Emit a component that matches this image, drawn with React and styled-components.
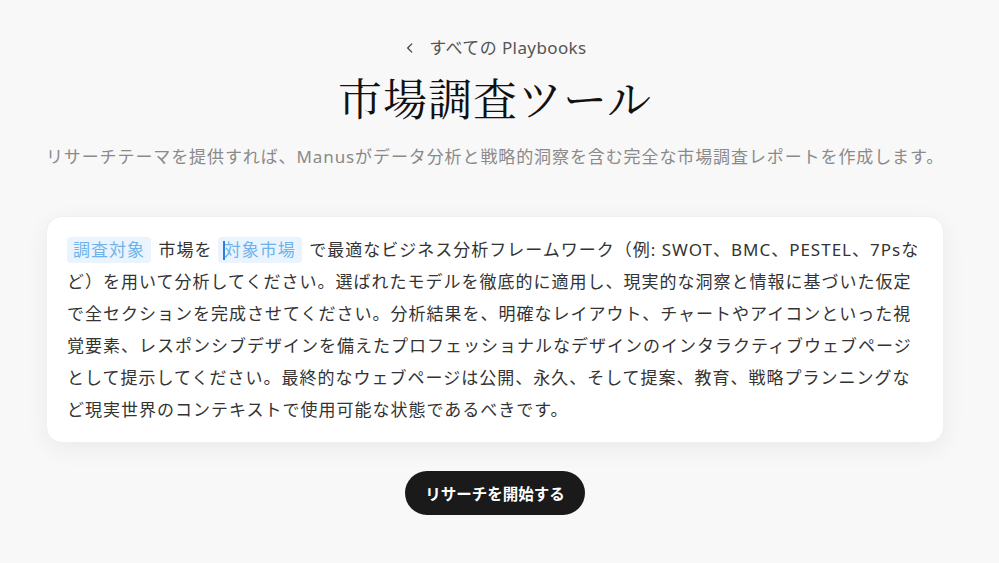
import React from 'react';
import styled, { createGlobalStyle } from 'styled-components';

const GlobalStyle = createGlobalStyle`
  html, body {
    margin: 0;
    padding: 0;
    background: #f8f8f8;
  }
  body {
    font-family: 'Noto Sans', 'Noto Sans CJK JP', sans-serif;
    color: #333;
  }
`;

const Page = styled.main`
  min-height: 563px;
  display: flex;
  flex-direction: column;
  align-items: center;
  padding: 36px 9px 0 0;
  box-sizing: border-box;
`;

const BackLink = styled.a`
  display: flex;
  align-items: center;
  gap: 12px;
  font-size: 17px;
  letter-spacing: 0.4px;
  color: #555;
  text-decoration: none;
  line-height: 24px;
  cursor: pointer;
`;

const Title = styled.h1`
  margin: 9px 0 0;
  font-family: 'Noto Serif CJK JP', 'Liberation Serif', 'Noto Sans CJK JP', serif;
  font-weight: 400;
  font-size: 44px;
  line-height: 56px;
  color: #111;
  letter-spacing: 1px;
`;

const Subtitle = styled.p`
  margin: 20px 0 0;
  font-size: 17px;
  line-height: 24px;
  letter-spacing: 0.9px;
  color: #8a8a8a;
`;

const Card = styled.section`
  margin-top: 47px;
  width: 898px;
  box-sizing: border-box;
  background: #fff;
  border-radius: 16px;
  padding: 17px 20px 16px;
  box-shadow: 0 6px 24px rgba(0, 0, 0, 0.06);
  border: 1px solid #f0f0f0;
`;

const Prompt = styled.p`
  margin: 0;
  font-size: 17px;
  line-height: 32px;
  letter-spacing: 1px;
  color: #333;
`;

const Chip = styled.span`
  display: inline-block;
  background: #e9f4fe;
  color: #6fb3ea;
  border-radius: 4px;
  padding: 0 6px;
  line-height: 26px;
  margin-right: 2px;
  position: relative;

  ${({ $caret }) => $caret && `
    &::before {
      content: '';
      position: absolute;
      left: 5px;
      top: 4px;
      width: 2px;
      height: 19px;
      background: #2b7fd8;
    }
  `}
`;

const StartButton = styled.button`
  margin-top: 28px;
  height: 44px;
  padding: 0 20px;
  border: none;
  border-radius: 22px;
  background: #1a1a1a;
  color: #fff;
  font-family: 'Noto Sans', 'Noto Sans CJK JP', sans-serif;
  font-weight: 700;
  font-size: 15.5px;
  cursor: pointer;
`;

const ChevronLeft = () => (
  <svg width="14" height="14" viewBox="0 0 24 24" fill="none" stroke="#444" strokeWidth="2.2" strokeLinecap="round" strokeLinejoin="round">
    <path d="M15 5l-7 7 7 7" />
  </svg>
);

const App = () => {
  return (
    <>
      <GlobalStyle />
      <Page>
        <BackLink>
          <ChevronLeft />
          <span>すべての Playbooks</span>
        </BackLink>
        <Title>市場調査ツール</Title>
        <Subtitle>リサーチテーマを提供すれば、Manusがデータ分析と戦略的洞察を含む完全な市場調査レポートを作成します。</Subtitle>

        <Card>
          <Prompt>
            <Chip>調査対象</Chip> 市場を <Chip $caret>対象市場</Chip> で最適なビジネス分析フレームワーク（例: SWOT、BMC、PESTEL、7Psなど）を用いて分析してください。選ばれたモデルを徹底的に適用し、現実的な洞察と情報に基づいた仮定で全セクションを完成させてください。分析結果を、明確なレイアウト、チャートやアイコンといった視覚要素、レスポンシブデザインを備えたプロフェッショナルなデザインのインタラクティブウェブページとして提示してください。最終的なウェブページは公開、永久、そして提案、教育、戦略プランニングなど現実世界のコンテキストで使用可能な状態であるべきです。
          </Prompt>
        </Card>

        <StartButton>リサーチを開始する</StartButton>
      </Page>
    </>
  );
};

export default App;
